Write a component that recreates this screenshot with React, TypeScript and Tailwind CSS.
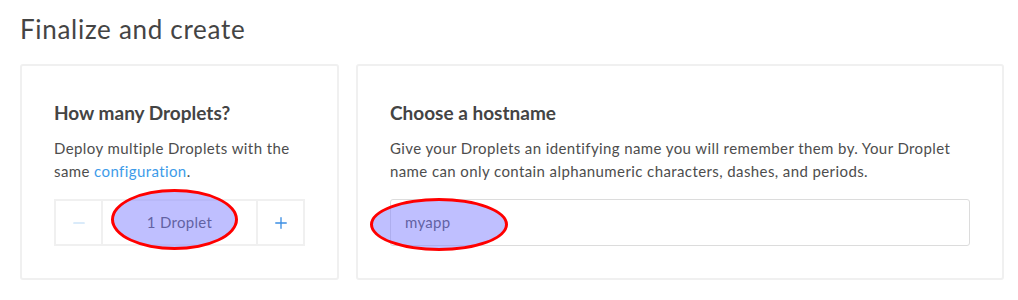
import { Minus, Plus } from "lucide-react";

const font = { fontFamily: "Lato, 'Open Sans', sans-serif" };

function Mark({ className }: { className: string }) {
  // the red annotation ring drawn over the screenshot
  return (
    <div
      className={`pointer-events-none absolute rounded-[50%] border-[3.5px] border-[#f00] bg-[rgba(128,128,255,0.5)] ${className}`}
    />
  );
}

export default function App() {
  return (
    <div className="min-h-[300px] bg-white px-5 pt-[12px] text-[#444]" style={font}>
      <h1 className="text-[26px] leading-[34px] font-normal tracking-[0.7px] text-[#444]">Finalize and create</h1>

      <div className="mt-[18px] flex gap-[17px]">
        <section className="w-[319px] shrink-0 rounded-[3px] border-2 border-[#f0f0f0] px-8 pt-[35px] pb-8">
          <h2 className="text-[19px] leading-[24px] font-bold text-[#444]">How many Droplets?</h2>
          <p className="mt-[12px] text-[15px] leading-[22.5px] tracking-[0.4px] text-[#4d4d4d]">
            Deploy multiple Droplets with the
            <br />
            same <a className="text-[#3d9be9]">configuration</a>.
          </p>
          <div className="relative mt-[17px] flex h-[47px] w-[251px] border-2 border-[#f0f0f0]">
            <button className="flex w-[47px] items-center justify-center border-r-2 border-[#f0f0f0] text-[#b5d7f6]">
              <Minus className="h-[18px] w-[18px]" strokeWidth={1.5} />
            </button>
            <div className="flex flex-1 items-center justify-center text-[15px] tracking-[0.3px] text-[#444]">1 Droplet</div>
            <button className="flex w-[47px] items-center justify-center border-l-2 border-[#f0f0f0] text-[#3d8fe3]">
              <Plus className="h-[18px] w-[18px]" strokeWidth={1.8} />
            </button>
            <Mark className="left-[55px] top-[-12px] h-[61px] w-[127px]" />
          </div>
        </section>

        <section className="w-[648px] shrink-0 rounded-[3px] border-2 border-[#f0f0f0] px-8 pt-[35px] pb-8">
          <h2 className="text-[19px] leading-[24px] font-bold text-[#444]">Choose a hostname</h2>
          <p className="mt-[12px] text-[15px] leading-[22.5px] tracking-[0.4px] text-[#4d4d4d]">
            Give your Droplets an identifying name you will remember them by. Your Droplet
            <br />
            name can only contain alphanumeric characters, dashes, and periods.
          </p>
          <div className="relative mt-[17px] flex h-[47px] items-center rounded-[3px] border border-[#dcdcdc] px-[14px] text-[15px] tracking-[0.3px] text-[#444]">
            myapp
            <Mark className="left-[-21px] top-[-2px] h-[53px] w-[138px]" />
          </div>
        </section>
      </div>
    </div>
  );
}
